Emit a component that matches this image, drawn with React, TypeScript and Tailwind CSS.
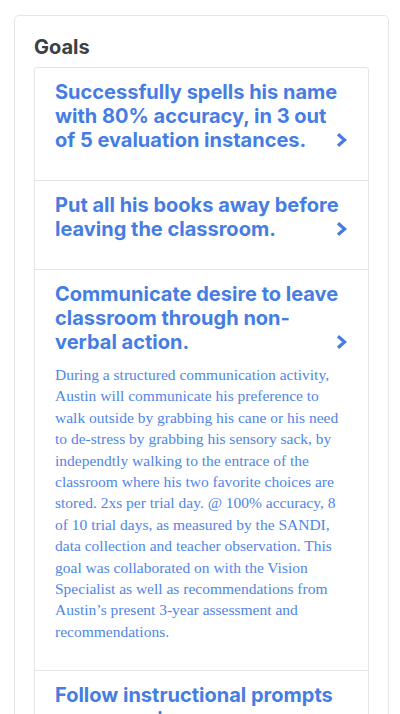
import { ReactNode } from 'react'

interface Goal { title: string; body?: string }

const goals: Goal[] = [
  { title: 'Successfully spells his name with 80% accuracy, in 3 out of 5 evaluation instances.' },
  { title: 'Put all his books away before leaving the classroom.' },
  {
    title: 'Communicate desire to leave classroom through non-verbal action.',
    body: 'During a structured communication activity, Austin will communicate his preference to walk outside by grabbing his cane or his need to de-stress by grabbing his sensory sack, by independtly walking to the entrace of the classroom where his two favorite choices are stored. 2xs per trial day. @ 100% accuracy, 8 of 10 trial days, as measured by the SANDI, data collection and teacher observation. This goal was collaborated on with the Vision Specialist as well as recommendations from Austin\u2019s present 3-year assessment and recommendations.',
  },
  { title: 'Follow instructional prompts across various environments.' },
]

function Chevron() {
  return (
    <svg width="13" height="16" viewBox="0 0 13 16" fill="none">
      <path d="M3 2.2 L9.6 8 L3 13.8" stroke="#457de3" strokeWidth="3.2" />
    </svg>
  )
}

function Row({ goal, children }: { goal: Goal; children?: ReactNode }) {
  return (
    <div className="border-t border-[#e4e4e4] first:border-t-0 pl-5 pr-5 pt-3 pb-7">
      <div className="relative">
        <h3 className="text-[20px] leading-[24px] font-bold text-[#457de3] pr-1" style={{ fontFamily: 'Inter, "Noto Sans", sans-serif' }}>
          {goal.title}
        </h3>
        <span className="absolute right-0 bottom-0 h-6 flex items-center">
          <Chevron />
        </span>
      </div>
      {children}
    </div>
  )
}

export default function App() {
  return (
    <div className="bg-white min-h-screen pt-[15px] pl-[14px]">
      <div className="w-[375px] border border-[#e6e6e6] rounded-[5px] px-[19px] pt-[17px] pb-5">
        <h2 className="text-[20px] leading-[28px] font-bold text-[#3b4045] mb-[6px]" style={{ fontFamily: 'Inter, "Noto Sans", sans-serif' }}>
          Goals
        </h2>
        <div className="border border-[#e4e4e4] rounded-[3px]">
          {goals.map(g => (
            <Row key={g.title} goal={g}>
              {g.body && (
                <p className="mt-[10px] text-[15.5px] leading-[21.4px] text-[#4f86e6]" style={{ fontFamily: '"Liberation Serif", serif' }}>
                  {g.body}
                </p>
              )}
            </Row>
          ))}
        </div>
      </div>
    </div>
  )
}
